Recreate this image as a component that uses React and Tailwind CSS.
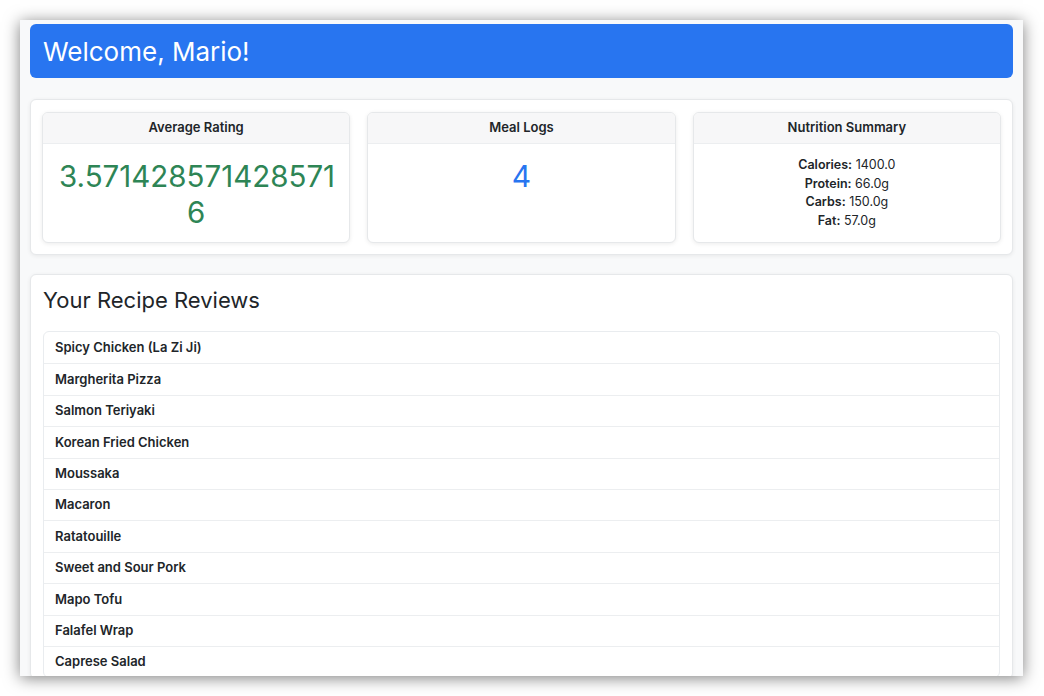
import React from "react";

const recipes = [
  "Spicy Chicken (La Zi Ji)",
  "Margherita Pizza",
  "Salmon Teriyaki",
  "Korean Fried Chicken",
  "Moussaka",
  "Macaron",
  "Ratatouille",
  "Sweet and Sour Pork",
  "Mapo Tofu",
  "Falafel Wrap",
  "Caprese Salad",
];

function StatCard({ title, children }) {
  return (
    <div className="flex h-[131px] flex-col overflow-hidden rounded-md border border-[#e6e8ea] bg-white shadow-[0_1px_4px_rgba(0,0,0,0.08)]">
      <div className="flex h-[31px] shrink-0 items-center justify-center border-b border-[#eceef0] bg-[#f7f7f8] text-[13px] font-semibold text-[#212529]">
        {title}
      </div>
      <div className="flex-1 px-4 pt-[14px] text-center">{children}</div>
    </div>
  );
}

export default function App() {
  return (
    <div
      className="h-[696px] w-[1044px] bg-white pl-[20px] pt-[20px]"
      style={{ fontFamily: "Inter, 'Noto Sans', sans-serif" }}
    >
      <div className="h-[656px] w-[1003px] overflow-hidden bg-[#f8f9fa] px-[10px] pt-[4px] shadow-[0_2px_15px_rgba(0,0,0,0.5)]">
        <div className="flex h-[54px] items-center rounded-md bg-[#2875f0] px-[13px] text-[26px] text-white">
          Welcome, Mario!
        </div>

        <div className="mt-[21px] rounded-md border border-[#e6e8ea] bg-white px-[11px] pt-[12px] pb-[11px] shadow-[0_1px_4px_rgba(0,0,0,0.07)]">
          <div className="grid grid-cols-3 gap-[17px]">
            <StatCard title="Average Rating">
              <div className="text-[29.5px] leading-[36px] text-[#2e8555]">
                3.571428571428571
                <br />6
              </div>
            </StatCard>
            <StatCard title="Meal Logs">
              <div className="text-[30px] leading-[36px] text-[#2875f0]">4</div>
            </StatCard>
            <StatCard title="Nutrition Summary">
              <div className="-mt-[2px] text-[12.5px] leading-[18.7px] text-[#212529]">
                <div>
                  <span className="font-semibold">Calories:</span> 1400.0
                </div>
                <div>
                  <span className="font-semibold">Protein:</span> 66.0g
                </div>
                <div>
                  <span className="font-semibold">Carbs:</span> 150.0g
                </div>
                <div>
                  <span className="font-semibold">Fat:</span> 57.0g
                </div>
              </div>
            </StatCard>
          </div>
        </div>

        <div className="mt-[19px] rounded-md border border-[#e6e8ea] bg-white px-[12px] pt-[11px] shadow-[0_1px_4px_rgba(0,0,0,0.07)]">
          <div className="text-[22px] leading-[28px] text-[#212529]">Your Recipe Reviews</div>
          <div className="mt-[17px] overflow-hidden rounded-md border border-[#e9ecef]">
            {recipes.map((r, i) => (
              <div
                key={r}
                className={
                  "flex h-[31.4px] items-center px-[11px] text-[13px] font-semibold text-[#212529] " +
                  (i > 0 ? "border-t border-[#eceef0]" : "")
                }
              >
                {r}
              </div>
            ))}
          </div>
        </div>
      </div>
    </div>
  );
}
